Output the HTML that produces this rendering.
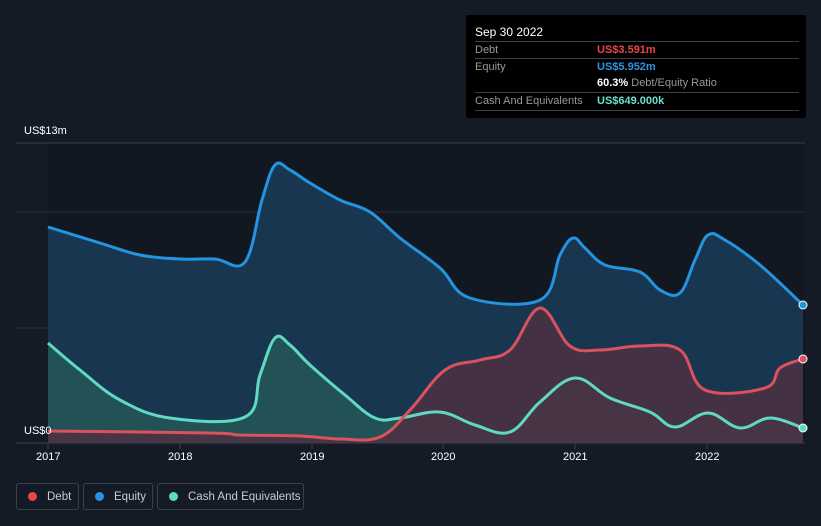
<!DOCTYPE html>
<html><head><style>
body{margin:0;width:821px;height:526px;background:#151b26;font-family:"Liberation Sans",sans-serif;overflow:hidden;position:relative}
.tt{position:absolute;left:466px;top:15px;width:340px;height:103px;background:#000;border-radius:2px;font-size:11px;color:#999}
.tt .h{position:absolute;left:9px;top:10px;color:#fff;font-size:12px}
.row{position:absolute;left:9px;width:324px;border-top:1px solid #3a3f48;height:17px;line-height:17px}
.row span{position:absolute;left:122px;font-weight:bold}
.leg{position:absolute;top:483px;height:27px;border:1px solid #3a404c;border-radius:3px;color:#c8ccd2;font-size:11.5px;line-height:26px;box-sizing:border-box;white-space:nowrap;overflow:hidden}
.leg i{display:inline-block;width:9px;height:9px;border-radius:50%;margin:0 10px 0 11px;vertical-align:-1px}
.ax{position:absolute;color:#fff;font-size:11px}
</style></head><body>
<svg width="821" height="526" style="position:absolute;left:0;top:0">
<rect x="48" y="143" width="757" height="300" fill="#121821"/>
<line x1="16" y1="143" x2="805" y2="143" stroke="#3a404a"/>
<line x1="16" y1="212" x2="805" y2="212" stroke="#2a303a"/>
<line x1="16" y1="328" x2="805" y2="328" stroke="#2a303a"/>
<path id="ea" fill="#1a3a55" opacity="0.9"/>
<path id="ca" fill="#275a57" opacity="0.8"/>
<path id="da" fill="#4e3042" opacity="0.85"/>
<g fill="none" stroke-width="3" stroke-linejoin="round">
<path id="el" stroke="#2394e0"/>
<path id="cl" stroke="#5fd9c4"/>
<path id="dl" stroke="#d9525e"/>
</g>
<line x1="16" y1="443" x2="805" y2="443" stroke="#3a404a"/>
<g stroke="#3a404a"><line x1="48" y1="443" x2="48" y2="449"/><line x1="180" y1="443" x2="180" y2="449"/><line x1="312" y1="443" x2="312" y2="449"/><line x1="443" y1="443" x2="443" y2="449"/><line x1="575" y1="443" x2="575" y2="449"/><line x1="707" y1="443" x2="707" y2="449"/></g>
<circle cx="803" cy="305" r="4" fill="#2394e0" stroke="#fff" stroke-width="1"/>
<circle cx="803" cy="359" r="4" fill="#d9525e" stroke="#fff" stroke-width="1"/>
<circle cx="803" cy="428" r="4" fill="#5fd9c4" stroke="#fff" stroke-width="1"/>
</svg>
<script>
function sp(p){var d="M"+p[0][0]+","+p[0][1];for(var i=0;i<p.length-1;i++){var a=p[i-1]||p[i],b=p[i],c=p[i+1],e=p[i+2]||c,t=0.18;
d+=" C"+(b[0]+(c[0]-a[0])*t)+","+(b[1]+(c[1]-a[1])*t)+" "+(c[0]-(e[0]-b[0])*t)+","+(c[1]-(e[1]-b[1])*t)+" "+c[0]+","+c[1];}return d;}
var E=[[48,227],[100,243],[140,255],[180,259],[215,259],[245,262],[262,200],[275,165],[290,170],[310,183],[340,200],[370,212],[400,238],[440,268],[470,298],[540,300],[560,255],[573,238],[585,248],[605,265],[640,272],[660,290],[680,293],[695,260],[708,235],[725,240],[760,265],[803,305]];
var C=[[48,343],[80,370],[120,400],[170,418],[245,417],[260,375],[275,338],[290,345],[310,365],[345,395],[375,418],[400,418],[440,412],[475,425],[510,432],[540,402],[575,378],[610,398],[650,412],[675,427],[708,413],[740,428],[770,418],[803,428]];
var D=[[48,431],[210,433],[240,435],[300,436],[340,439],[380,437],[410,410],[445,370],[480,360],[510,350],[540,308],[570,346],[600,350],[640,346],[680,350],[705,390],[765,388],[780,368],[803,359]];
function s(id,a){document.getElementById(id).setAttribute("d",a);}
s("el",sp(E));s("cl",sp(C));s("dl",sp(D));
s("ea",sp(E)+" L803,443 L48,443Z");s("ca",sp(C)+" L803,443 L48,443Z");s("da",sp(D)+" L803,443 L48,443Z");
</script>
<div class="ax" style="left:24px;top:125px">US$13m</div>
<div class="ax" style="left:24px;top:425px">US$0</div>
<div class="ax" style="left:36px;top:451px">2017</div>
<div class="ax" style="left:168px;top:451px">2018</div>
<div class="ax" style="left:300px;top:451px">2019</div>
<div class="ax" style="left:431px;top:451px">2020</div>
<div class="ax" style="left:563px;top:451px">2021</div>
<div class="ax" style="left:695px;top:451px">2022</div>
<div class="tt">
<div class="h">Sep 30 2022</div>
<div class="row" style="top:26px">Debt<span style="color:#e84848">US$3.591m</span></div>
<div class="row" style="top:43px">Equity<span style="color:#2b96e4">US$5.952m</span></div>
<div class="row" style="top:60px;border-top:none"><span style="color:#fff">60.3% <b style="color:#999;font-weight:normal">Debt/Equity Ratio</b></span></div>
<div class="row" style="top:77px;border-bottom:1px solid #3a3f48">Cash And Equivalents<span style="color:#6ae0cc">US$649.000k</span></div>
</div>
<div class="leg" style="left:16px;width:63px"><i style="background:#e84848"></i>Debt</div>
<div class="leg" style="left:83px;width:70px"><i style="background:#2394e0"></i>Equity</div>
<div class="leg" style="left:157px;width:147px"><i style="background:#5fd9c4"></i>Cash And Equivalents</div>
</body></html>
